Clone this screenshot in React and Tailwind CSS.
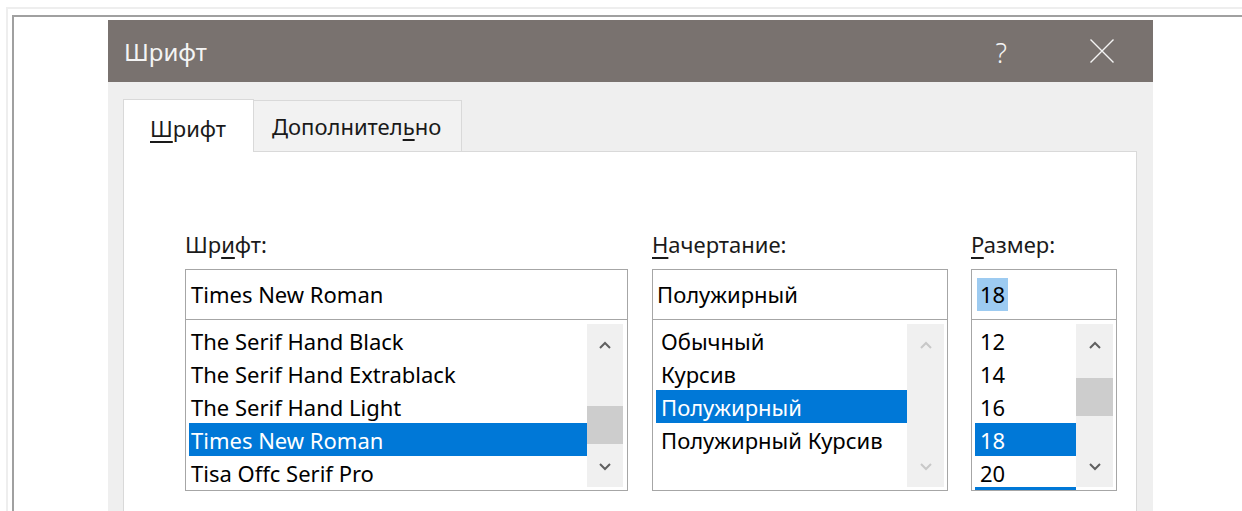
const FONTS = [
  'The Serif Hand Black',
  'The Serif Hand Extrablack',
  'The Serif Hand Light',
  'Times New Roman',
  'Tisa Offc Serif Pro',
];

const STYLES = ['Обычный', 'Курсив', 'Полужирный', 'Полужирный Курсив'];

const SIZES = ['12', '14', '16', '18', '20'];

const FONT_STACK = "font-['Noto_Sans','Open_Sans',sans-serif]";

export default function App() {
  return (
    <div className={`h-[511px] w-[1242px] overflow-hidden bg-white pl-[6px] pt-[7px] ${FONT_STACK}`}>
      <div className="h-full w-[1300px] border-l-2 border-t-2 border-[#eeeeee] pl-[4px] pt-[6px]">
        <div className="h-full border-l-2 border-t-2 border-[#a0a0a0] pl-[94px] pt-[3px]">
          <FontDialog />
        </div>
      </div>
    </div>
  );
}

function FontDialog() {
  return (
    <div className="w-[1045px]">
      <div className="flex h-[62px] items-center bg-[#79726f] pl-[16px] pt-[2px] text-[24px] text-[#f4f4f4]">
        <span className="flex-1">Шрифт</span>
        <span className="mr-[82px] text-[27px] font-light leading-none">?</span>
        <svg width="26" height="26" viewBox="0 0 26 26" className="mr-[38px] mb-[2px]">
          <path d="M1.5 1.5 L24.5 24.5 M24.5 1.5 L1.5 24.5" stroke="#f4f4f4" strokeWidth="1.4" fill="none" />
        </svg>
      </div>

      <div className="h-[440px] bg-[#efefef] pl-[15px] pr-[16px] pt-[17px]">
        <div className="flex items-end">
          <div className="relative z-10 -mb-px flex h-[53px] w-[131px] justify-start border-l border-r border-t border-[#d9d9d9] bg-white pl-[26px] pt-[12px] text-[22px] leading-[33px] text-[#1a1a1a]">
            <Mnemonic before="" hot="Ш" after="рифт" />
          </div>
          <div className="flex h-[51px] w-[208px] border-r border-t border-[#d9d9d9] bg-[#f2f2f2] pl-[18px] pt-[9px] text-[22px] leading-[33px] text-[#1a1a1a]">
            <Mnemonic before="Дополнител" hot="ь" after="но" />
          </div>
        </div>

        <div className="h-[400px] border border-[#d9d9d9] bg-white pl-[61px] pt-[76px]">
          <div className="flex text-[22px] leading-[33px] text-[#1a1a1a]">
            <Column
              width="w-[443px]"
              label={<Mnemonic before="Шр" hot="и" after="фт:" />}
              value={<span className="pl-[5px]">Times New Roman</span>}
              items={FONTS}
              selected="Times New Roman"
              itemPad="pl-[2px]"
              thumbOffset="mt-[40px]"
              scrollWidth="w-[36px]"
              listPad="pr-[4px]"
            />
            <Column
              width="ml-[24px] w-[296px]"
              label={<Mnemonic before="" hot="Н" after="ачертание:" />}
              value={<span className="pl-[4px]">Полужирный</span>}
              items={STYLES}
              selected="Полужирный"
              itemPad="pl-[5px]"
              disabled
              scrollWidth="w-[37px]"
              listPad="pr-[3px]"
            />
            <Column
              width="ml-[23px] w-[146px]"
              label={<Mnemonic before="" hot="Р" after="азмер:" />}
              value={
                <span className="ml-[5px] h-[33px] bg-[#9dcbf1] px-[3px]">18</span>
              }
              items={SIZES}
              selected="18"
              itemPad="pl-[5px]"
              thumbOffset="mt-[12px]"
              scrollWidth="w-[37px]"
              listPad="pr-[3px]"
              trailing
            />
          </div>
        </div>
      </div>
    </div>
  );
}

function Mnemonic({ before, hot, after }) {
  return (
    <span>
      {before}
      <span className="underline decoration-[1.5px] underline-offset-[4px]">{hot}</span>
      {after}
    </span>
  );
}

function Column({ width, label, value, items, selected, itemPad, thumbOffset, disabled, scrollWidth, listPad, trailing }) {
  return (
    <div className={`${width} flex flex-col`}>
      <div className="mb-[8px] h-[33px]">{label}</div>
      <div className="flex h-[51px] items-center border border-[#a6a6a6] text-black">{value}</div>
      <div className={`flex h-[171px] border-b border-l border-r border-[#a6a6a6] pl-[3px] pt-[4px] ${listPad}`}>
        <div className="relative flex flex-1 flex-col overflow-hidden">
          {items.map((item) => (
            <div
              key={item}
              className={`h-[33px] shrink-0 whitespace-nowrap pt-px ${itemPad} ${
                item === selected ? 'bg-[#0078d7] text-white' : 'text-black'
              }`}
            >
              {item}
            </div>
          ))}
          {trailing ? <div className="absolute bottom-0 left-0 right-0 h-[3px] bg-[#0078d7]" /> : null}
        </div>
        <ScrollBar width={scrollWidth} thumbOffset={thumbOffset} disabled={disabled} />
      </div>
    </div>
  );
}

function ScrollBar({ width, thumbOffset, disabled }) {
  const color = disabled ? '#c8c8c8' : '#606060';
  return (
    <div className={`${width} mb-[3px] flex flex-col bg-[#f0f0f0]`}>
      <div className="flex h-[42px] shrink-0 items-center justify-center">
        <Chevron up color={color} />
      </div>
      {disabled ? null : <div className={`${thumbOffset} h-[38px] shrink-0 bg-[#cdcdcd]`} />}
      <div className="mt-auto flex h-[40px] shrink-0 items-center justify-center">
        <Chevron color={color} />
      </div>
    </div>
  );
}

function Chevron({ up, color }) {
  return (
    <svg width="12" height="8" viewBox="0 0 12 8">
      <path
        d={up ? 'M1 7 L6 2 L11 7' : 'M1 1 L6 6 L11 1'}
        stroke={color}
        strokeWidth="2"
        fill="none"
      />
    </svg>
  );
}
